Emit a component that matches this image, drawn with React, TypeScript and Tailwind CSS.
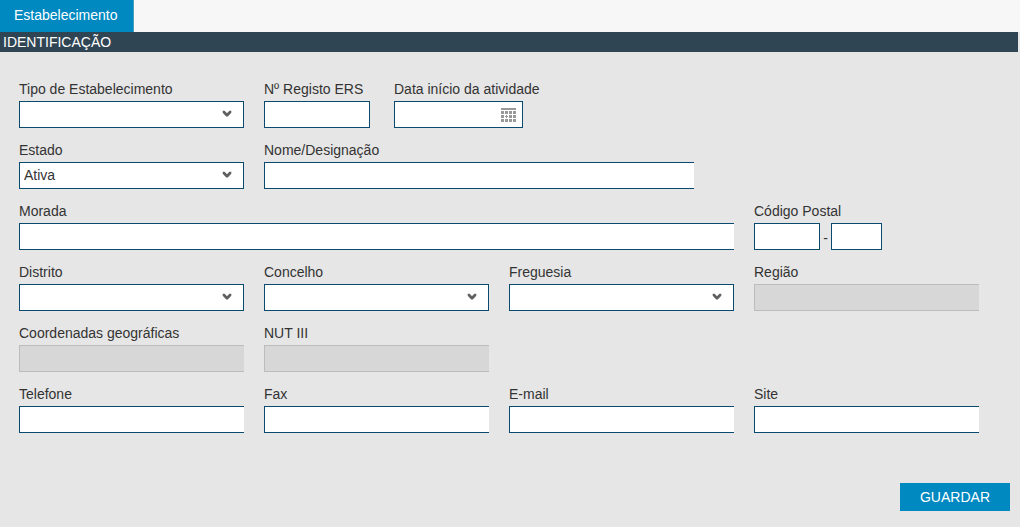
import React from "react";

const box = "block h-[27px] w-full rounded-none px-1 text-sm text-[#333] outline-none";
const active = "border border-[#0b4a6f] bg-white";
const open = "border border-r-0 border-[#0b4a6f] bg-white";
const locked = "border border-r-0 border-[#bcbcbc] bg-[#d7d7d7]";

type FieldProps = {
  id: string;
  label: string;
  className?: string;
  children: React.ReactNode;
};

function Field({ id, label, className = "", children }: FieldProps) {
  return (
    <div className={`flex min-w-0 flex-col gap-1 ${className}`}>
      <label htmlFor={id} className="text-sm leading-4 whitespace-nowrap">
        {label}
      </label>
      {children}
    </div>
  );
}

type TextProps = { id: string; label: string; className?: string; disabled?: boolean };

function TextField({ id, label, className, disabled = false }: TextProps) {
  return (
    <Field id={id} label={label} className={className}>
      <input id={id} type="text" disabled={disabled} className={`${box} ${disabled ? locked : open}`} />
    </Field>
  );
}

function SelectField({ id, label, options = [""] }: { id: string; label: string; options?: string[] }) {
  return (
    <Field id={id} label={label}>
      <div className="relative">
        <select id={id} className={`${box} ${active} appearance-none pb-[2px]`}>
          {options.map((option) => (
            <option key={option}>{option}</option>
          ))}
        </select>
        <svg
          className="pointer-events-none absolute top-2 right-3 h-2 w-[10px]"
          viewBox="0 0 10 8"
          fill="#5f5f5f"
          aria-hidden="true"
        >
          <path d="M0.7 1.8H2.6L5 4.2 7.4 1.8H9.3V3.8L5.8 7.6H4.2L0.7 3.8z" />
        </svg>
      </div>
    </Field>
  );
}

function CalendarIcon() {
  return (
    <svg width="15" height="14" viewBox="0 0 15 14" fill="#999" shapeRendering="crispEdges" aria-hidden="true">
      <rect width="15" height="2" />
      {[3, 7, 11].map((y) =>
        [0, 4, 8, 12].map((x) =>
          x === 4 && y === 7 ? (
            <path key={`${x}-${y}`} d="M5 7h1v1h1v1H6v1H5V9H4V8h1z" />
          ) : (
            <rect key={`${x}-${y}`} x={x} y={y} width="3" height="3" />
          ),
        ),
      )}
    </svg>
  );
}

export default function App() {
  return (
    <div className="flex min-h-screen flex-col bg-[#e6e6e6] font-['Liberation_Sans',Arial,sans-serif] text-sm text-[#333]">
      <nav className="flex h-8 bg-[#f7f7f7]">
        <a
          href="#estabelecimento"
          className="flex items-center border-r border-[#4b9dbd] bg-[#0088c0] pr-[15px] pb-[2px] pl-[14px] text-white"
        >
          Estabelecimento
        </a>
      </nav>
      <h1 className="mr-[2px] h-5 bg-[#2f4554] pl-[3px] text-sm leading-5 text-white">IDENTIFICAÇÃO</h1>

      <form id="estabelecimento" onSubmit={(event) => event.preventDefault()}>
        <div className="grid grid-cols-4 gap-x-5 gap-y-[14px] pt-[29px] pr-[41px] pl-[19px]">
          <SelectField id="tipo" label="Tipo de Estabelecimento" />
          <div className="col-span-3 flex gap-6">
            <Field id="registo" label="Nº Registo ERS" className="w-[106px]">
              <input id="registo" type="text" className={`${box} ${active}`} />
            </Field>
            <Field id="data" label="Data início da atividade">
              <div className={`flex h-[27px] w-[129px] items-center pr-[6px] ${active}`}>
                <input id="data" type="text" className="h-full min-w-0 flex-1 px-1 outline-none" />
                <button type="button" aria-label="Abrir calendário">
                  <CalendarIcon />
                </button>
              </div>
            </Field>
          </div>

          <SelectField id="estado" label="Estado" options={["Ativa"]} />
          <TextField id="nome" label="Nome/Designação" className="col-span-2 mr-10" />

          <TextField id="morada" label="Morada" className="col-start-1 col-span-3" />
          <Field id="postal" label="Código Postal">
            <div className="flex items-center">
              <input id="postal" type="text" className={`${box} ${active} max-w-[66px]`} />
              <span className="w-[11px] shrink-0 pt-[2px] text-center">-</span>
              <input type="text" aria-label="Código Postal, extensão" className={`${box} ${active} max-w-[51px]`} />
            </div>
          </Field>

          <SelectField id="distrito" label="Distrito" />
          <SelectField id="concelho" label="Concelho" />
          <SelectField id="freguesia" label="Freguesia" />
          <TextField id="regiao" label="Região" disabled />

          <TextField id="coordenadas" label="Coordenadas geográficas" disabled />
          <TextField id="nut" label="NUT III" disabled />

          <TextField id="telefone" label="Telefone" className="col-start-1" />
          <TextField id="fax" label="Fax" />
          <TextField id="email" label="E-mail" />
          <TextField id="site" label="Site" />
        </div>
        <div className="flex justify-end pt-[50px] pr-[10px] pb-4">
          <button type="submit" className="h-7 w-[110px] bg-[#0088c0] text-sm text-white">
            GUARDAR
          </button>
        </div>
      </form>
    </div>
  );
}
